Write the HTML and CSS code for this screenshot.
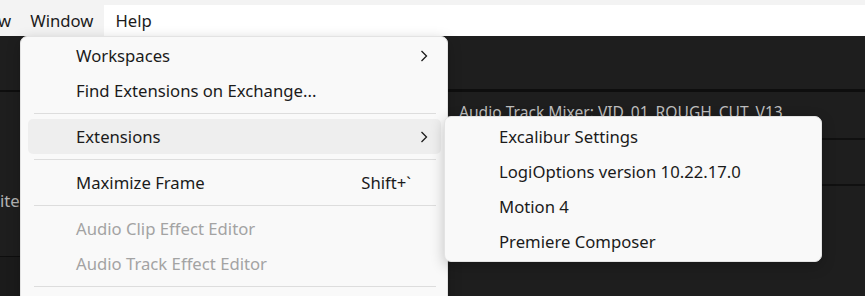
FILE: index.html
```html
<!DOCTYPE html>
<html>
<head>
  <meta charset="UTF-8">
  <title>Window menu</title>
  <link rel="stylesheet" href="styles.css">
</head>
<body>
  <div class="app">
    <div class="menubar">
      <span class="mb-item mb-cut">w</span>
      <span class="mb-item mb-open">Window</span>
      <span class="mb-item">Help</span>
    </div>

    <div class="workspace">
      <div class="pane pane-left">
        <div class="pane-top"></div>
        <div class="pane-body">
          <div class="pane-label">iter</div>
        </div>
        <div class="pane-foot"></div>
      </div>
      <div class="pane pane-right">
        <div class="pane-top"></div>
        <div class="pane-head">Audio Track Mixer: VID_01_ROUGH_CUT_V13</div>
        <div class="pane-row"></div>
        <div class="pane-rest"></div>
      </div>
    </div>

    <!-- Window menu -->
    <div class="menu menu-main">
      <div class="item">
        <span class="label">Workspaces</span>
        <svg class="chev" width="8" height="12" viewBox="0 0 8 12"><polyline points="1.5,1 6.5,6 1.5,11" /></svg>
      </div>
      <div class="item"><span class="label">Find Extensions on Exchange...</span></div>
      <div class="sep"></div>
      <div class="item item-hover">
        <span class="label">Extensions</span>
        <svg class="chev" width="8" height="12" viewBox="0 0 8 12"><polyline points="1.5,1 6.5,6 1.5,11" /></svg>
      </div>
      <div class="sep"></div>
      <div class="item">
        <span class="label">Maximize Frame</span>
        <span class="shortcut">Shift+`</span>
      </div>
      <div class="sep"></div>
      <div class="item item-off"><span class="label">Audio Clip Effect Editor</span></div>
      <div class="item item-off"><span class="label">Audio Track Effect Editor</span></div>
      <div class="sep"></div>
    </div>

    <!-- Extensions submenu -->
    <div class="menu menu-sub">
      <div class="item"><span class="label">Excalibur Settings</span></div>
      <div class="item"><span class="label">LogiOptions version 10.22.17.0</span></div>
      <div class="item"><span class="label">Motion 4</span></div>
      <div class="item"><span class="label">Premiere Composer</span></div>
    </div>
  </div>
</body>
</html>
```

FILE: styles.css
```css
body {
  margin: 0;
  font-family: 'Noto Sans', 'Open Sans', sans-serif;
  color: #1b1b1b;
}
.app {
  position: relative;
  width: 865px;
  height: 296px;
  overflow: hidden;
  background: #1e1e1e;
}

/* menu bar */
.menubar {
  display: flex;
  height: 31px;
  border-top: 5px solid #f3f3f3;
  background: #ffffff;
  font-size: 16.7px;
}
.mb-item {
  display: flex;
  align-items: center;
  padding: 0 11px;
  line-height: 31px;
}
.mb-cut {
  margin-left: -13px;
  padding-right: 8px;
  background: #f3f3f3;
}
.mb-open {
  background: #f3f3f3;
}

/* dark panels behind the menus */
.workspace {
  display: grid;
  grid-template-columns: 448px 1fr;
  height: 260px;
}
.pane {
  display: flex;
  flex-direction: column;
}
.pane-top {
  height: 53px;
  border-bottom: 3px solid #0e0e0e;
}
.pane-left .pane-top {
  height: 54px;
  border-bottom-width: 2px;
}
.pane-body {
  height: 165px;
  border-bottom: 1px solid #0e0e0e;
  padding-top: 97px;
  box-sizing: border-box;
}
.pane-label {
  color: #b4b4b4;
  font-size: 16.7px;
  line-height: 24px;
}
.pane-foot {
  flex: 1;
  background: #1b1b1b;
}
.pane-head {
  height: 48px;
  border-bottom: 2px solid #101010;
  padding: 9px 0 0 11px;
  box-sizing: border-box;
  color: #bdbdbd;
  font-size: 15.6px;
  white-space: nowrap;
}
.pane-row {
  height: 44px;
  border-bottom: 2px solid #101010;
}
.pane-rest {
  flex: 1;
}

/* menus */
.menu {
  position: absolute;
  box-sizing: border-box;
  background: #f9f9f9;
  border: 1px solid #e3e3e3;
  border-radius: 7px;
  box-shadow: 0 4px 14px rgba(0, 0, 0, 0.22);
  font-size: 16.7px;
}
.menu-main {
  left: 20px;
  top: 36px;
  width: 428px;
  height: 300px;
  padding: 1px 6px 0 7px;
}
.menu-sub {
  left: 444px;
  top: 116px;
  width: 378px;
  padding: 2px 6px 0 4px;
  height: 146px;
}
.item {
  display: flex;
  align-items: center;
  height: 35px;
  padding: 0 13px 0 48px;
  border-radius: 5px;
  white-space: nowrap;
}
.menu-sub .item {
  padding-left: 50px;
}
.label {
  flex: 1;
}
.item-hover {
  background: #eeeeee;
}
.item-off {
  color: #a3a3a3;
}
.shortcut {
  margin-right: 17px;
}
.chev {
  fill: none;
  stroke: #1b1b1b;
  stroke-width: 1.3;
}
.sep {
  height: 1px;
  margin: 5px 5px 5px 6px;
  background: #dddddd;
}
```
